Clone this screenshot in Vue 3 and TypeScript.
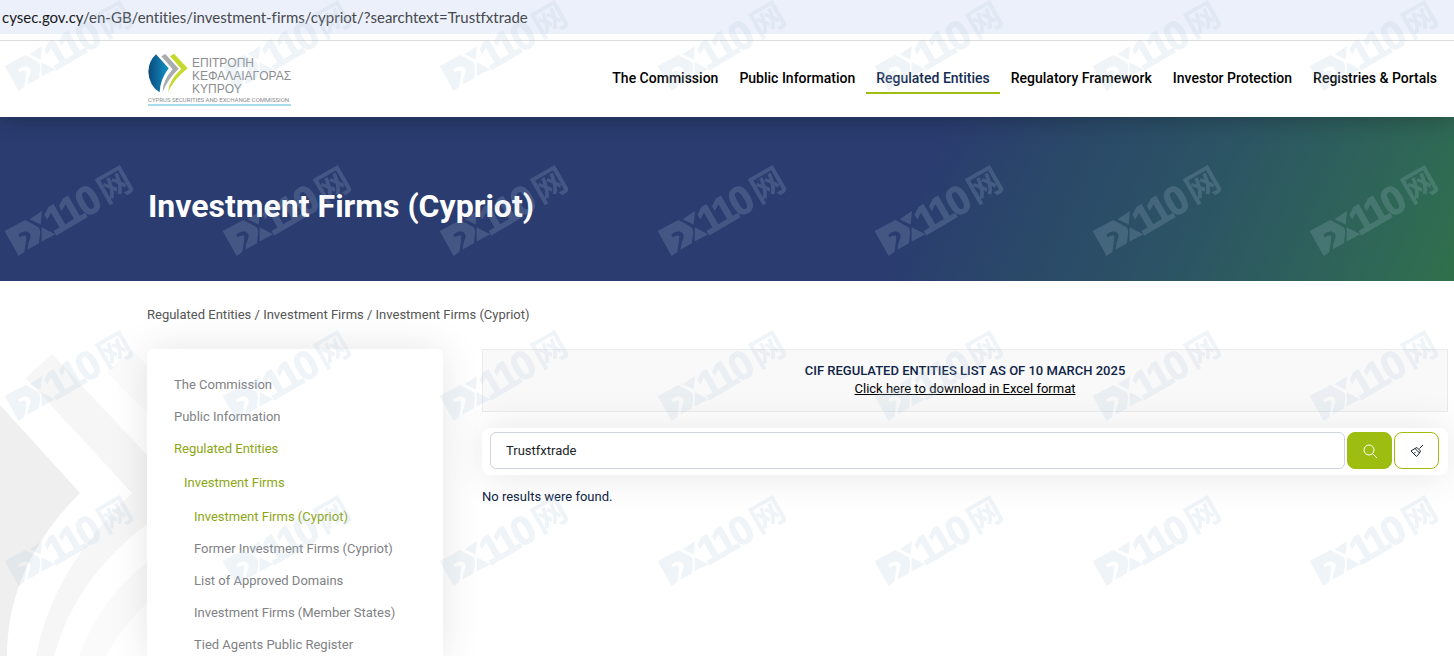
<script setup lang="ts">
import { ref } from 'vue'

interface NavItem {
  label: string
  active?: boolean
}

const navItems: NavItem[] = [
  { label: 'The Commission' },
  { label: 'Public Information' },
  { label: 'Regulated Entities', active: true },
  { label: 'Regulatory Framework' },
  { label: 'Investor Protection' },
  { label: 'Registries & Portals' },
]

const crumbs: string[] = ['Regulated Entities', 'Investment Firms', 'Investment Firms (Cypriot)']

const firmPages: NavItem[] = [
  { label: 'Investment Firms (Cypriot)', active: true },
  { label: 'Former Investment Firms (Cypriot)' },
  { label: 'List of Approved Domains' },
  { label: 'Investment Firms (Member States)' },
  { label: 'Tied Agents Public Register' },
]

const query = ref('Trustfxtrade')
</script>

<template>
  <div class="page">
    <div class="address-bar"><span class="host">cysec.gov.cy</span>/en-GB/entities/investment-firms/cypriot/?searchtext=Trustfxtrade</div>

    <header class="site-header">
      <a class="brand" href="#">
        <span class="brand-top">
          <svg class="brand-mark" viewBox="0 0 120 120" aria-hidden="true">
            <defs>
              <linearGradient id="blueMark" x1="0" y1="0" x2="1" y2="0">
                <stop offset="0" stop-color="#0a4a7c" />
                <stop offset="1" stop-color="#1492c6" />
              </linearGradient>
            </defs>
            <path d="M24 4 Q2 24 1 56 Q3 98 35 118 Q36 80 62 46 Z" fill="url(#blueMark)" />
            <path d="M40 10 L52 3 L92 47 Q58 80 44 117 Q44 82 74 49 Z" fill="#a9abae" />
            <path d="M66 10 L78 2 L119 46 Q78 78 60 118 Q62 82 100 48 Z" fill="#c5d92d" />
          </svg>
          <span class="brand-name">ΕΠΙΤΡΟΠΗ<br />ΚΕΦΑΛΑΙΑΓΟΡΑΣ<br />ΚΥΠΡΟΥ</span>
        </span>
        <span class="brand-caption">CYPRUS SECURITIES AND EXCHANGE COMMISSION</span>
      </a>
      <nav class="main-nav" aria-label="Main">
        <a v-for="item in navItems" :key="item.label" href="#" :class="{ active: item.active }">{{ item.label }}</a>
      </nav>
    </header>

    <section class="hero">
      <h1>Investment Firms (Cypriot)</h1>
    </section>

    <main class="content">
      <svg class="backdrop" viewBox="0 0 150 316" aria-hidden="true">
        <path d="M0 65 L80 153 Q7 226 7 316 H0 Z" fill="#efefef" />
        <path d="M26 38 L52 14 L150 118 V182 Q76 236 54 316 H36 Q52 230 132 153 Z" fill="#f6f6f6" />
        <path d="M107 32 L132 10 L150 28 V76 Z" fill="#fbfbfb" />
        <path d="M150 220 Q100 258 79 316 H106 Q122 286 150 260 Z" fill="#fafafa" />
      </svg>

      <nav class="crumbs" aria-label="Breadcrumb">
        <template v-for="(crumb, i) in crumbs" :key="crumb"><span v-if="i > 0"> / </span><a href="#">{{ crumb }}</a></template>
      </nav>

      <div class="columns">
        <aside class="side">
          <ul>
            <li><a href="#">The Commission</a></li>
            <li><a href="#">Public Information</a></li>
            <li>
              <a class="active" href="#">Regulated Entities</a>
              <ul>
                <li>
                  <a class="active" href="#">Investment Firms</a>
                  <ul>
                    <li v-for="page in firmPages" :key="page.label">
                      <a href="#" :class="{ active: page.active }">{{ page.label }}</a>
                    </li>
                  </ul>
                </li>
              </ul>
            </li>
          </ul>
        </aside>

        <div class="results">
          <div class="notice">
            <strong>CIF REGULATED ENTITIES LIST AS OF 10 MARCH 2025</strong>
            <a href="#">Click here to download in Excel format</a>
          </div>
          <form class="search" @submit.prevent>
            <input v-model="query" type="text" aria-label="Search text" />
            <button class="go" type="submit" aria-label="Search">
              <svg viewBox="0 0 16 16" aria-hidden="true">
                <circle cx="7" cy="7" r="5" />
                <path d="M10.700 10.700 L15 15" />
              </svg>
            </button>
            <button class="clear" type="button" aria-label="Clear" @click="query = ''">
              <svg viewBox="0 0 16 16" aria-hidden="true">
                <path d="M14 2 L10.500 5.500 M8 4.500 L11.500 8 L10.500 10 L7.500 13.500 L2 8 L6 5.500 Z M6 5.500 L10.500 10 M5 10.500 L6.500 9" />
              </svg>
            </button>
          </form>
          <p class="empty">No results were found.</p>
        </div>
      </div>
    </main>

    <svg class="watermark" aria-hidden="true">
      <defs>
        <pattern id="marks" x="-13" y="-15" width="435" height="165" patternUnits="userSpaceOnUse">
          <g id="mark">
            <path
              fill-rule="evenodd"
              transform="scale(0.333)"
              d="M53 243 L115 210 L155 232 Q162 240 158 262 L156 280 L122 299 Q122 282 131 262 Q132 246 116 244 Q102 246 94 254 L97 262 Q112 254 118 258 Q118 272 112 306 L95 318 Z M128 208 L165 183 L161 224 Z M164 232 L205 253 L164 275 Z"
            />
            <g transform="translate(18 81) rotate(-30)">
              <text class="digits" x="40 57 76" y="29">110</text>
              <text class="glyph" x="101" y="27">网</text>
            </g>
          </g>
          <use href="#mark" x="218" />
        </pattern>
      </defs>
      <rect width="100%" height="100%" fill="url(#marks)" />
    </svg>
  </div>
</template>

<style>
body {
  margin: 0;
}
</style>

<style scoped>
* {
  box-sizing: border-box;
}

.page {
  position: relative;
  display: flex;
  flex-direction: column;
  min-height: 100vh;
  overflow: hidden;
  background: #fff;
  color: #0e2447;
  font: 13px/18px Roboto, 'Liberation Sans', sans-serif;
}

a {
  color: inherit;
  text-decoration: none;
}

.address-bar {
  height: 34px;
  padding-left: 2px;
  background: #ecf0fa;
  color: #45484d;
  font: 15px/34px Lato, 'Open Sans', sans-serif;
  font-variant-ligatures: none;
  white-space: nowrap;
}

.host {
  color: #17191c;
}

.site-header {
  position: relative;
  z-index: 1;
  display: flex;
  justify-content: space-between;
  margin-top: 6px;
  height: 77px;
  padding: 0 7px 0 148px;
  border-top: 1px solid #dcdcdc;
  background: #fff;
  box-shadow: 0 0 24px rgba(0, 0, 0, 0.3);
  clip-path: inset(0 0 -40px 0);
}

.brand {
  padding-top: 12px;
  color: #8b8d90;
  font-family: 'Liberation Sans', sans-serif;
}

.brand-top {
  display: flex;
  gap: 4px;
}

.brand-mark {
  width: 40px;
  height: 40px;
}

.brand-name {
  padding-top: 4px;
  font-size: 12px;
  line-height: 13px;
}

.brand-caption {
  display: block;
  border-bottom: 2px solid #a9dcec;
  font-family: Roboto, sans-serif;
  font-size: 6px;
  line-height: 8px;
  white-space: nowrap;
}

.main-nav {
  display: flex;
  gap: 1px;
  align-items: flex-start;
  padding-top: 23px;
  color: #000;
  font-size: 14px;
  font-weight: 500;
  line-height: 28px;
  white-space: nowrap;
}

.main-nav a {
  padding: 0 10px;
}

.main-nav .active {
  border-bottom: 2px solid #9dbe10;
  color: #142c52;
}

.hero {
  padding: 68px 147px 54px 148px;
  background: linear-gradient(113deg, #2a3c70 62%, #2a4769 70%, #2c5564 82%, #2f6a54 96%, #2f7049 100%);
}

h1 {
  margin: 0;
  color: #fff;
  font-size: 32px;
  font-weight: 700;
  line-height: 42px;
}

.content {
  position: relative;
  display: flex;
  flex: 1;
  flex-direction: column;
  padding: 25px 6px 0 147px;
}

.backdrop {
  position: absolute;
  top: 59px;
  left: 0;
  width: 150px;
  height: 316px;
}

.crumbs {
  color: #555;
  white-space: pre;
}

.columns {
  position: relative;
  display: grid;
  flex: 1;
  grid-template-columns: 296px 1fr;
  gap: 39px;
  margin-top: 25px;
}

.side {
  padding: 20px 27px 0;
  border-radius: 6px 6px 0 0;
  background: #fff;
  box-shadow: 0 0 40px rgba(0, 0, 0, 0.1);
  color: #808285;
}

.side ul {
  margin: 0;
  padding: 0;
  list-style: none;
}

.side ul ul {
  padding: 2px 0 0 10px;
}

.side a {
  display: block;
  line-height: 32px;
  white-space: nowrap;
}

.side .active {
  color: #8ba614;
}

.notice {
  display: flex;
  flex-direction: column;
  align-items: center;
  padding: 12px 12px 13px;
  border: 1px solid #ebebeb;
  background: #f9f9f9;
}

.notice strong {
  font-weight: 500;
}

.notice a {
  color: #000;
  text-decoration: underline;
}

.search {
  display: flex;
  gap: 2px;
  margin-top: 16px;
  padding: 4px 9px 6px 8px;
  border-radius: 8px;
  background: #fff;
  box-shadow: 0 0 40px rgba(0, 0, 0, 0.1);
}

.search input {
  flex: 1;
  min-width: 0;
  height: 37px;
  padding: 0 15px;
  border: 1px solid #ced4da;
  border-radius: 6px;
  background: #fff;
  color: #212529;
  font: inherit;
}

.search button {
  display: flex;
  align-items: center;
  justify-content: center;
  width: 45px;
  height: 37px;
  padding: 0;
  border: 1px solid #9dbe10;
  border-radius: 8px;
  background: #fff;
}

.search .go {
  background: #9dbe10;
}

.search svg {
  width: 16px;
  height: 16px;
  fill: none;
  stroke: #1c2433;
}

.search .go svg {
  stroke: #fff;
}

.empty {
  margin: 13px 0 0;
}

.watermark {
  position: absolute;
  z-index: 2;
  inset: 0;
  width: 100%;
  height: 100%;
  fill: #b0c8dc;
  opacity: 0.19;
  pointer-events: none;
}

.digits {
  font: bold 40px 'Liberation Sans', sans-serif;
  stroke: #b0c8dc;
}

.glyph {
  font: bold 34px 'Noto Sans CJK SC', sans-serif;
}
</style>
